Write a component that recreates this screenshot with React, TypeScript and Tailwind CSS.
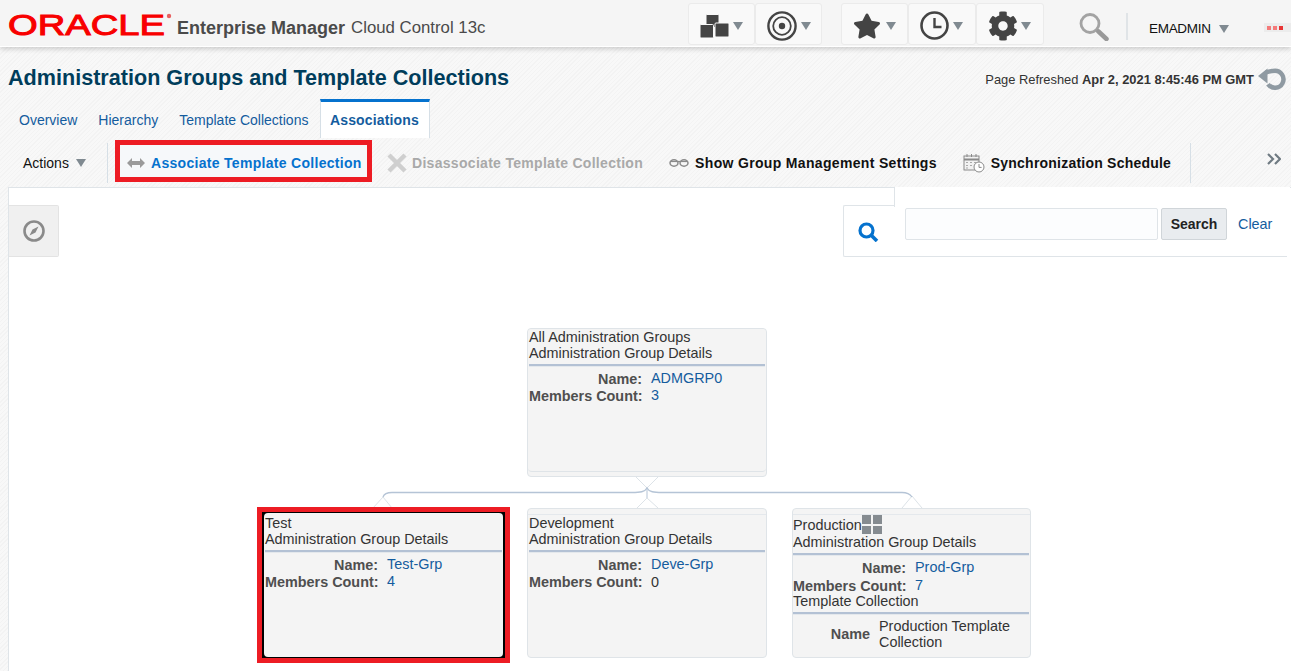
import { FaCog, FaStar } from "react-icons/fa";

/* ───────────── Icons ───────────── */

const Caret = () => (
  <span className="inline-block shrink-0 w-0 h-0 border-x-[5.5px] border-x-transparent border-t-[8px] border-t-[#808a91]" />
);

const GroupsIcon = () => (
  <svg viewBox="0 0 29 24" className="w-[29px] h-[24px] shrink-0" fill="#444">
    <rect x="6" y="0.5" width="13" height="13" rx="1" stroke="#f9f9f9" />
    <rect x="0" y="10.5" width="13.5" height="13.5" rx="1" stroke="#f9f9f9" />
    <rect x="15" y="9" width="14" height="14" rx="1" stroke="#f9f9f9" />
  </svg>
);

const TargetIcon = () => (
  <svg viewBox="0 0 30 30" className="w-[30px] h-[30px] shrink-0" fill="none" stroke="#444">
    <circle cx="15" cy="15" r="13.6" strokeWidth="2.4" />
    <circle cx="15" cy="15" r="8.8" strokeWidth="1.8" />
    <circle cx="15" cy="15" r="3.2" fill="#444" stroke="none" />
  </svg>
);

const ClockIcon = () => (
  <svg viewBox="0 0 29 29" className="w-[29px] h-[29px] shrink-0" fill="none" stroke="#444">
    <circle cx="14.5" cy="14.5" r="13" strokeWidth="2.6" />
    <path d="M14.5 7v9h7" strokeWidth="2.4" />
  </svg>
);

const MagnifierIcon = () => (
  <svg viewBox="0 0 30 28" className="w-[30px] h-[28px]" fill="none" stroke="#a3a3a3">
    <circle cx="11" cy="10.500" r="9" strokeWidth="2.8" />
    <path d="M17 17l2 2" strokeWidth="2.5" />
    <path d="M19.500 18.500l8 7.500" strokeWidth="4.500" strokeLinecap="round" stroke="#999" />
  </svg>
);

const RefreshIcon = () => (
  <svg viewBox="0 0 29 26" className="w-[29px] h-[26px] shrink-0" fill="none">
    <path d="M8 6.500C11 5 14 4.800 17 4.800a8.500 8.500 0 1 1-7 13.400" stroke="#8f9aa2" strokeWidth="4.500" />
    <path d="M0 10l9.500-7.500v15z" fill="#8f9aa2" />
  </svg>
);

const SwapIcon = () => (
  <svg viewBox="0 0 18 10" className="w-[18px] h-[10px] shrink-0" fill="#9a9a9a">
    <path d="M0 5l5-5v3h8V0l5 5-5 5V7H5v3z" />
  </svg>
);

const CrossIcon = () => (
  <svg viewBox="0 0 20 20" className="w-[20px] h-[20px] shrink-0" fill="none" stroke="#cfcfcf" strokeWidth="4.500">
    <path d="M2 2l16 16M18 2L2 18" />
  </svg>
);

const GlassesIcon = () => (
  <svg viewBox="0 0 20 8" className="w-[20px] h-[8px] shrink-0" fill="none" stroke="#8a8a8a" strokeWidth="1.500">
    <ellipse cx="5" cy="4" rx="4" ry="3.200" />
    <ellipse cx="15" cy="4" rx="4" ry="3.200" />
    <path d="M1 2.500h18" strokeWidth="1.200" />
  </svg>
);

const ScheduleIcon = () => (
  <svg viewBox="0 0 22 20" className="w-[22px] h-[20px] shrink-0" fill="none" stroke="#8a8a8a">
    <rect x="1" y="3" width="15" height="14" fill="#f2f2f2" />
    <path d="M1 6.500h15" strokeWidth="2" />
    <path d="M4 1v3M8.500 1v3M13 1v3" />
    <path d="M3 9.500h2M7 9.500h2M11 9.500h2M3 12.500h2M7 12.500h2M3 15h2" stroke="#aaa" />
    <circle cx="16" cy="14" r="5" fill="#fff" />
    <path d="M16 11v3.400h2.600" />
  </svg>
);

const CompassIcon = () => (
  <svg viewBox="0 0 22 22" className="w-[22px] h-[22px]" fill="none" stroke="#8a8a8a">
    <circle cx="11" cy="11" r="9.500" strokeWidth="2.600" />
    <path d="M15.500 6.500l-6 3L6.500 15.500l6-3z" fill="#8a8a8a" stroke="none" />
  </svg>
);

const BlueSearchIcon = () => (
  <svg viewBox="0 0 21 20" className="w-[21px] h-[20px]" fill="none" stroke="#0572ce">
    <circle cx="8.500" cy="8.500" r="6.500" strokeWidth="3.200" />
    <path d="M13 13l6 6" strokeWidth="3.600" />
  </svg>
);

const GridIcon = () => (
  <svg viewBox="0 0 20 19" className="w-[20px] h-[19px]" fill="#858b90">
    <rect x="0" y="0" width="9" height="9" />
    <rect x="11" y="0" width="9" height="9" />
    <rect x="0" y="11" width="9" height="8" />
    <rect x="11" y="11" width="9" height="8" />
  </svg>
);

const ChevronsIcon = () => (
  <svg viewBox="0 0 14 12" className="w-[14px] h-[12px]" fill="none" stroke="#6f7a82" strokeWidth="2.200">
    <path d="M1 1l5 5-5 5M8 1l5 5-5 5" />
  </svg>
);

/* ───────────── Pieces ───────────── */

const HeaderButton = ({ icon, width, gap }: { icon: React.ReactNode; width: string; gap: string }) => (
  <div className={`${width} h-[42px] shrink-0 flex items-center pl-[11px] pt-[3px] ${gap} bg-[#f9f9f9] border border-[#ebebeb] rounded-[3px]`}>
    {icon}
    <Caret />
  </div>
);

const Row = ({ label, value, plain }: { label: string; value: string; plain?: boolean }) => (
  <>
    <div className="text-right font-bold text-[#4f4f4f] whitespace-nowrap">{label}</div>
    <div className={plain ? "text-[#333]" : "-mt-px text-[#145c9e]"}>{value}</div>
  </>
);

const Divider = () => <div className="h-[3px] mr-[1px] border-t-2 border-t-[#b3c1d4] bg-[#e4e8ec]" />;

type NodeProps = {
  left: string;
  top: string;
  title: string;
  name: string;
  count: string;
  plainCount?: boolean;
  className: string;
  rowsClass?: string;
  children?: React.ReactNode;
  titleExtra?: React.ReactNode;
};

const GroupNode = ({
  left,
  top,
  title,
  name,
  count,
  plainCount,
  className,
  rowsClass = "mt-[4px] leading-[17px]",
  children,
  titleExtra,
}: NodeProps) => (
  <div className={`absolute ${left} ${top} ${className} bg-[#f4f4f4] rounded-[4px] text-[14.4px] leading-[16px] text-[#333]`}>
    <div className="flex items-start">
      <span>{title}</span>
      {titleExtra}
    </div>
    <div className="mb-[3px]">Administration Group Details</div>
    <Divider />
    <div className={`grid grid-cols-[113px_auto] gap-x-[9px] justify-start ${rowsClass}`}>
      <Row label="Name:" value={name} />
      <Row label="Members Count:" value={count} plain={plainCount} />
    </div>
    {children}
  </div>
);

const Tab = ({ label }: { label: string }) => (
  <span className="text-[#145c9e]">{label}</span>
);

export default function App() {
  return (
    <div
      className="relative w-[1291px] h-[671px] overflow-hidden flex flex-col text-[14px] text-[#333] bg-[#f6f6f6] bg-[repeating-linear-gradient(135deg,#f8f8f8_0,#f8f8f8_2px,#f3f3f3_2px,#f3f3f3_3px)]"
      style={{ fontFamily: '"Liberation Sans", Arial, sans-serif' }}
    >
      {/* Top bar */}
      <header className="relative z-10 h-[47px] shrink-0 flex items-start bg-[#f5f5f5] border-b border-b-white shadow-[0_2px_5px_rgba(0,0,0,0.18)]">
        <div className="w-[688px] shrink-0 flex items-center h-[46px] pl-[8px]">
          <svg viewBox="0 0 164 30" className="w-[164px] h-[30px] mt-[1px] shrink-0 overflow-visible">
            <text
              x="0"
              y="26"
              textLength="157"
              lengthAdjust="spacingAndGlyphs"
              fontFamily='"Liberation Sans", Arial, sans-serif'
              fontSize="30"
              fill="#f80000"
              stroke="#f80000"
              strokeWidth="1"
            >
              ORACLE
            </text>
            <circle cx="161" cy="7" r="2.200" fill="#e86060" />
          </svg>
          <span className="ml-[5px] text-[18px] font-bold text-[#4a4a4a] leading-none mt-[10px]">Enterprise Manager</span>
          <span className="ml-[6px] text-[16.800px] text-[#4a4a4a] leading-none mt-[10px]">Cloud Control 13c</span>
        </div>
        <div className="flex shrink-0 mt-[3px]">
          <HeaderButton width="w-[67px]" gap="gap-[4px]" icon={<GroupsIcon />} />
          <HeaderButton width="w-[67px]" gap="gap-[4px]" icon={<TargetIcon />} />
        </div>
        <div className="flex shrink-0 mt-[3px] ml-[19px]">
          <HeaderButton width="w-[67px]" gap="gap-[5px]" icon={<FaStar className="w-[28px] h-[26px] shrink-0 text-[#444]" />} />
          <HeaderButton width="w-[68px]" gap="gap-[4px]" icon={<ClockIcon />} />
          <HeaderButton width="w-[68px]" gap="gap-[3px]" icon={<FaCog className="w-[30px] h-[30px] shrink-0 text-[#444]" />} />
        </div>
        <div className="ml-[35px] mt-[13px] shrink-0">
          <MagnifierIcon />
        </div>
        <div className="ml-[17px] mt-[13px] w-[2px] h-[27px] shrink-0 bg-[#e0e4e7]" />
        <div className="ml-[21px] mt-[21px] shrink-0 flex items-center gap-[8px] text-[13.500px] leading-[16px] text-[#111] tracking-[-0.3px] whitespace-nowrap">
          EMADMIN
          <Caret />
        </div>
        <div className="ml-[35px] mt-[23px] w-[27px] h-[9px] shrink-0 flex items-center gap-[2px] pl-[3px] bg-[#ececec]">
          <span className="w-[4px] h-[4px] bg-[#f47a7a]" />
          <span className="w-[4px] h-[4px] bg-[#f47a7a]" />
          <span className="w-[4px] h-[4px] bg-[#e83535]" />
        </div>
      </header>

      {/* Title */}
      <div className="h-[52px] shrink-0 flex items-start pl-[8px] pr-[4px]">
        <h1 className="mt-[18px] text-[21.600px] leading-[26px] font-bold text-[#003d5b]">
          Administration Groups and Template Collections
        </h1>
        <div className="ml-auto mt-[19px] flex items-start gap-[4px] text-[12.900px] leading-[26px]">
          <span className="mt-[1px]">
            Page Refreshed <b className="font-bold">Apr 2, 2021 8:45:46 PM GMT</b>
          </span>
          <RefreshIcon />
        </div>
      </div>

      {/* Tabs */}
      <nav className="h-[39px] shrink-0 flex items-stretch pl-[19px] leading-[37px]">
        <div className="flex gap-[21px] mr-[11px] pt-[3px]">
          <Tab label="Overview" />
          <Tab label="Hierarchy" />
          <Tab label="Template Collections" />
        </div>
        <div className="ml-[1px] w-[110px] text-center pr-[2px] bg-white border-x border-x-[#d6dfe6] border-t-[3px] border-t-[#0572ce] font-bold text-[#145c9e] tracking-[0.15px]">
          Associations
        </div>
      </nav>

      {/* Toolbar */}
      <div className="h-[49px] shrink-0 flex items-center font-bold pt-[1px] tracking-[0.3px]">
        <div className="w-[108px] pl-[23px] h-[40px] flex items-center gap-[7px] font-normal tracking-normal text-[#111] border-r border-r-[#d6dfe6]">
          Actions
          <Caret />
        </div>
        <div className="ml-[7px] w-[257px] h-[42px] -mt-[5px] flex items-center pl-[7px] pt-[5px] gap-[6px] bg-[#f6f8fa] border-[5px] border-[#ed1c24] text-[#0572ce] whitespace-nowrap">
          <SwapIcon />
          Associate Template Collection
        </div>
        <div className="ml-[15px] flex items-center gap-[5px] text-[#a9a9a9] whitespace-nowrap">
          <CrossIcon />
          Disassociate Template Collection
        </div>
        <div className="ml-[26px] flex items-center gap-[6px] text-[#111] tracking-[0.33px] whitespace-nowrap">
          <GlassesIcon />
          Show Group Management Settings
        </div>
        <div className="ml-[26px] h-[40px] flex items-center gap-[6px] text-[#111] tracking-[0.22px] whitespace-nowrap pr-[19px] border-r border-r-[#d6dfe6]">
          <ScheduleIcon />
          Synchronization Schedule
        </div>
        <span className="ml-auto mr-[10px] -mt-[9px]">
          <ChevronsIcon />
        </span>
      </div>

      {/* Canvas */}
      <main className="relative flex-1 ml-[8px] bg-white border-t border-l border-[#dfe4e8]">
        {/* Overview tab */}
        <div className="absolute left-0 top-[17px] w-[50px] h-[52px] flex items-center justify-center bg-[#f0f0f0] border border-l-0 border-[#e3e3e3] rounded-r-[2px]">
          <CompassIcon />
        </div>

        {/* Search panel */}
        <div className="absolute left-[834px] top-[17px] w-[444px] h-[52px] border-t border-b border-l border-[#dfe4e8] rounded-l-[2px] flex items-start text-[14.400px]">
          <div className="absolute left-[50px] -top-[19px] w-[396px] h-[20px] bg-white border-l border-[#dfe4e8]" />
          <div className="mt-[16px] ml-[14px]">
            <BlueSearchIcon />
          </div>
          <div className="mt-[2px] ml-[26px] w-[253px] h-[32px] bg-[#fcfdfe] border border-[#dfe4e8] rounded-[2px]" />
          <div className="mt-[2px] ml-[3px] w-[66px] h-[32px] flex items-center justify-center text-[14px] font-bold text-[#222] bg-[#e9ecef] border border-[#d0d5d9] rounded-[2px]">
            Search
          </div>
          <div className="mt-[2px] ml-[11px] leading-[32px] text-[#145c9e]">Clear</div>
        </div>

        {/* Connectors */}
        <svg className="absolute left-[361px] top-[283px] w-[570px] h-[45px]" viewBox="0 0 570 45" fill="none">
          <path d="M266 6l11 11 11-11" stroke="#dde3e8" />
          <path d="M267 37l10-10 11 10" stroke="#dde3e8" />
          <path d="M3 37l10-11 9 11" stroke="#dde3e8" fill="#fff" />
          <path d="M532 37l10-12 10 12" stroke="#dde3e8" fill="#fff" />
          <path
            d="M13 26c1-3 3-4.500 9-4.500h240c8 0 13-.5 15-4.500 2 4 7 4.500 15 4.500h240c6 0 8 1.500 10 4.500"
            stroke="#b5c4d6"
            strokeWidth="1.300"
          />
          <path d="M277 17v10" stroke="#b5c4d6" />
        </svg>

        {/* Root node */}
        <div className="absolute left-[518px] top-[140px] w-[240px] h-[149px] bg-[#f4f4f4] border border-[#dfe4e8] rounded-[4px]" />
        <GroupNode
          left="left-[519px]"
          top="top-[141px]"
          className="w-[238px] h-[143px] border-b border-b-[#dfe4e8] pl-[1px]"
          title="All Administration Groups"
          name="ADMGRP0"
          count="3"
        />

        {/* Test node, highlighted */}
        <div className="absolute left-[248px] top-[319px] w-[253px] h-[156px] border-[5px] border-[#ed1c24] bg-black" />
        <GroupNode
          left="left-[255px]"
          top="top-[325px]"
          className="w-[239px] h-[144px] pl-[1px] pt-[2px]"
          title="Test"
          name="Test-Grp"
          count="4"
        />

        {/* Development node */}
        <GroupNode
          left="left-[518px]"
          top="top-[320px]"
          className="w-[240px] h-[150px] border border-[#dfe4e8] pl-[1px] pt-[6px]"
          title="Development"
          name="Deve-Grp"
          count="0"
          plainCount
          rowsClass="mt-[4px] leading-[16.500px]"
        >
          <div className="absolute left-0 right-0 top-[5px] h-px bg-[#e4e8ec]" />
        </GroupNode>

        {/* Production node */}
        <GroupNode
          left="left-[783px]"
          top="top-[320px]"
          className="w-[239px] h-[150px] border border-[#dfe4e8] pt-[8px]"
          title="Production"
          name="Prod-Grp"
          count="7"
          rowsClass="mt-[3px] leading-[18px]"
          titleExtra={
            <span className="-mt-[2px]">
              <GridIcon />
            </span>
          }
        >
          <div className="absolute left-0 right-0 top-[5px] h-px bg-[#e4e8ec]" />
          <div className="-mt-[2px] leading-[16px] mb-[3px]">Template Collection</div>
          <Divider />
          <div className="grid grid-cols-[77px_1fr] gap-x-[9px] mt-[3px] items-center">
            <div className="text-right font-bold text-[#4f4f4f]">Name</div>
            <div className="pr-[10px]">Production Template Collection</div>
          </div>
        </GroupNode>
      </main>
    </div>
  );
}
